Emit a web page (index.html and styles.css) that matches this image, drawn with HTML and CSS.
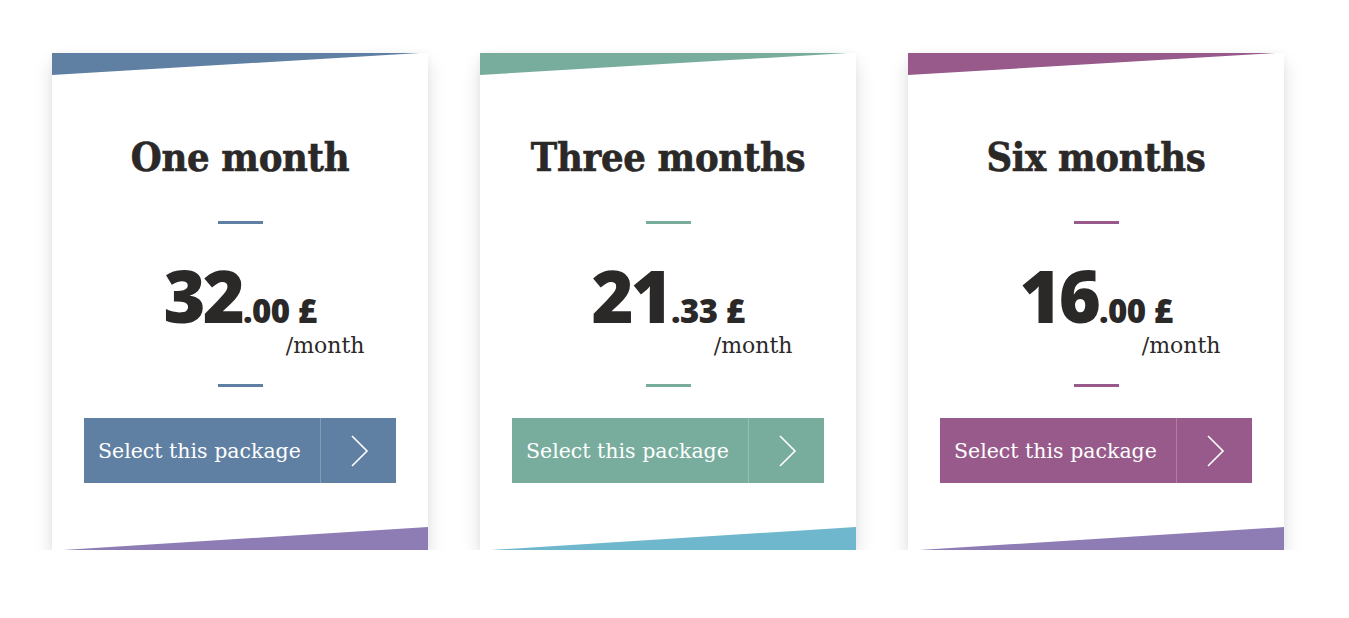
FILE: index.html
```html
<!DOCTYPE html>
<html lang="en">
<head>
<meta charset="utf-8">
<title>Packages</title>
<link rel="stylesheet" href="styles.css">
</head>
<body>
<div class="plans">
  <div class="card card-blue">
    <h2 class="title">One month</h2>
    <div class="rule"></div>
    <div class="price">
      <div class="amount"><span class="int">32</span><span class="dec">.00 £</span></div>
      <div class="per">/month</div>
    </div>
    <div class="rule"></div>
    <a class="btn" href="#"><span class="btn-label">Select this package</span><span class="btn-arrow"><svg width="18" height="32" viewBox="0 0 18 32"><path d="M1 1 L16 16 L1 31" fill="none" stroke="#fff" stroke-width="1.6"/></svg></span></a>
  </div>
  <div class="card card-teal">
    <h2 class="title">Three months</h2>
    <div class="rule"></div>
    <div class="price">
      <div class="amount"><span class="int">21</span><span class="dec">.33 £</span></div>
      <div class="per">/month</div>
    </div>
    <div class="rule"></div>
    <a class="btn" href="#"><span class="btn-label">Select this package</span><span class="btn-arrow"><svg width="18" height="32" viewBox="0 0 18 32"><path d="M1 1 L16 16 L1 31" fill="none" stroke="#fff" stroke-width="1.6"/></svg></span></a>
  </div>
  <div class="card card-purple">
    <h2 class="title">Six months</h2>
    <div class="rule"></div>
    <div class="price">
      <div class="amount"><span class="int">16</span><span class="dec">.00 £</span></div>
      <div class="per">/month</div>
    </div>
    <div class="rule"></div>
    <a class="btn" href="#"><span class="btn-label">Select this package</span><span class="btn-arrow"><svg width="18" height="32" viewBox="0 0 18 32"><path d="M1 1 L16 16 L1 31" fill="none" stroke="#fff" stroke-width="1.6"/></svg></span></a>
  </div>
</div>
</body>
</html>
```

FILE: styles.css
```css
html, body {
  margin: 0;
  padding: 0;
  background: #ffffff;
}

.plans {
  display: flex;
  gap: 52px;
  padding: 53px 0 0 52px;
}

.card {
  --accent: #6080a3;
  --bottom: #8e7db4;
  position: relative;
  width: 376px;
  box-sizing: border-box;
  background: #fff;
  box-shadow: 0 10px 18px rgba(0, 0, 0, 0.13), 0 0 6px rgba(0, 0, 0, 0.04);
  display: flex;
  flex-direction: column;
  align-items: center;
  padding: 80px 32px 67px;
}

.card-blue { --accent: #6080a3; --bottom: #8e7db4; }
.card-teal { --accent: #78ad9e; --bottom: #6eb7cc; }
.card-purple { --accent: #985a8b; --bottom: #8e7db4; }

.card::before {
  content: "";
  position: absolute;
  left: 0;
  top: 0;
  width: 368px;
  height: 22px;
  background: var(--accent);
  clip-path: polygon(0 0, 100% 0, 0 100%);
}

.card::after {
  content: "";
  position: absolute;
  right: 0;
  bottom: 0;
  width: 365px;
  height: 23px;
  background: var(--bottom);
  clip-path: polygon(0 100%, 100% 0, 100% 100%);
}

.title {
  margin: 0;
  font-family: "DejaVu Serif Condensed", "DejaVu Serif", serif;
  font-stretch: condensed;
  font-weight: 700;
  font-size: 39.5px;
  line-height: 48px;
  color: #2b2828;
  letter-spacing: -0.3px;
  -webkit-text-stroke: 0.6px #2b2828;
}

.rule {
  width: 45px;
  height: 3px;
  background: var(--accent);
}

.title + .rule {
  margin-top: 40px;
}

.price {
  margin-top: 35px;
  display: flex;
  flex-direction: column;
  align-items: center;
}

.amount {
  font-family: "Open Sans", sans-serif;
  font-weight: 800;
  font-size: 72px;
  color: #2b2828;
  line-height: 72px;
  white-space: nowrap;
}

.int {
  letter-spacing: -3px;
}

.dec {
  font-size: 33px;
  line-height: 1;
  letter-spacing: -0.5px;
  margin-left: 1px;
}

.per {
  align-self: flex-end;
  margin-right: -48px;
  margin-top: 2px;
  font-family: "DejaVu Serif", serif;
  font-size: 22px;
  line-height: 26px;
  color: #2b2828;
}

.price + .rule {
  margin-top: 25px;
}

.btn {
  margin-top: 31px;
  width: 312px;
  height: 65px;
  display: flex;
  background: var(--accent);
  color: #fff;
  text-decoration: none;
}

.btn-label {
  flex: 1;
  display: flex;
  align-items: center;
  padding-left: 14px;
  font-family: "DejaVu Serif", serif;
  font-size: 20.5px;
  border-right: 1px solid rgba(255, 255, 255, 0.22);
}

.btn-arrow {
  width: 75px;
  display: flex;
  align-items: center;
  justify-content: center;
}

.btn-arrow svg {
  display: block;
  margin-left: 3px;
}
```
